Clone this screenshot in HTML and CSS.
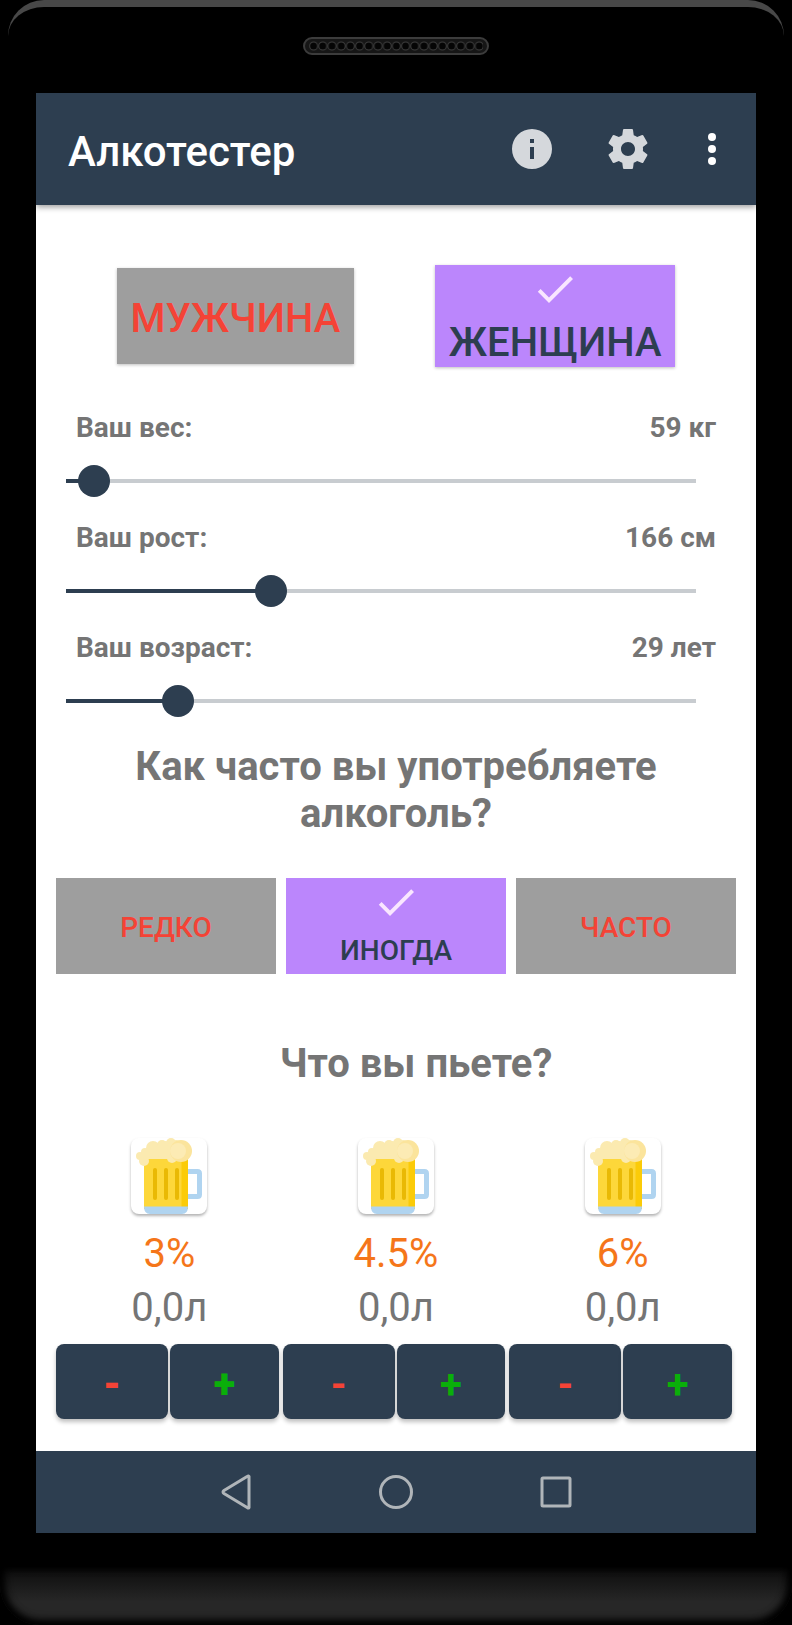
FILE: index.html
```html
<!DOCTYPE html>
<html lang="ru">
<head>
<meta charset="UTF-8">
<meta name="viewport" content="width=device-width, initial-scale=1">
<title>Алкотестер</title>
<link rel="stylesheet" href="styles.css">
</head>
<body>

<!-- shared icons -->
<svg class="sprite" aria-hidden="true">
	<symbol id="check" viewBox="0 0 24 24">
		<path d="M9 16.2 4.8 12l-1.4 1.4L9 19 21 7l-1.4-1.4z" fill="#f9e6ff"/>
	</symbol>
	<symbol id="beer" viewBox="11 8 76 76">
		<path d="M66 41.500h11.500q2 0 2 2v21q0 2-2 2H66" fill="none" stroke="#b0d4f0" stroke-width="5"/>
		<path d="M24 27h44v52H24z" fill="#fdd73a"/>
		<path d="M61.500 27H68v52h-6.500z" fill="#fbcb08"/>
		<path d="M24 76.500h44q0 7.500-6 7.500H30q-6 0-6-7.500z" fill="#b0d4f0"/>
		<g fill="#e9b904">
			<rect x="33" y="38" width="4" height="32" rx="2"/>
			<rect x="44" y="38" width="4" height="32" rx="2"/>
			<rect x="55" y="38" width="4" height="32" rx="2"/>
		</g>
		<g fill="#fbeab0">
			<circle cx="20" cy="26" r="4"/>
			<circle cx="25" cy="22" r="4"/>
			<circle cx="24" cy="31" r="5"/>
			<circle cx="33" cy="18" r="7"/>
			<circle cx="42" cy="15" r="5"/>
			<circle cx="51" cy="13" r="5"/>
			<circle cx="52" cy="28" r="5"/>
			<path d="M21 22h42v7H21z"/>
			<circle cx="45" cy="20" r="9"/>
			<circle cx="56" cy="19" r="9"/>
		</g>
		<circle cx="61" cy="21" r="11" fill="#fbe49c"/>
		<circle cx="58" cy="21" r="8" fill="#fcebb4"/>
	</symbol>
</svg>

<div class="phone">
	<div class="phone_top">
		<svg class="speaker" viewBox="0 0 186 18" aria-hidden="true">
			<defs>
				<pattern id="holes" x="6" y="3" width="9.2" height="12" patternUnits="userSpaceOnUse">
					<circle cx="4.600" cy="6" r="4" fill="#050505" stroke="#3c3c3c"/>
				</pattern>
			</defs>
			<rect x="1" y="1" width="184" height="16" rx="8" fill="#161616" stroke="#3c3c3c" stroke-width="2"/>
			<rect x="6" y="3" width="174" height="12" fill="url(#holes)"/>
		</svg>
	</div>

	<div class="screen">
		<header class="toolbar">
			<h1>Алкотестер</h1>
			<button class="tool" aria-label="Информация">
				<svg viewBox="0 0 24 24"><path d="M12 2a10 10 0 1 0 0 20 10 10 0 0 0 0-20zm1 15h-2v-6h2v6zm0-8h-2V7h2v2z" fill="#d5d8dc"/></svg>
			</button>
			<button class="tool" aria-label="Настройки">
				<svg viewBox="0 0 24 24"><path d="M19.430 12.980c.04-.32.07-.64.07-.98s-.03-.66-.07-.98l2.110-1.650c.19-.15.24-.42.12-.64l-2-3.460c-.12-.22-.39-.3-.61-.22l-2.490 1c-.52-.4-1.080-.73-1.690-.98l-.38-2.650C14.460 2.180 14.250 2 14 2h-4c-.25 0-.46.18-.49.42l-.38 2.650c-.61.25-1.170.59-1.690.98l-2.490-1c-.23-.09-.49 0-.61.22l-2 3.460c-.13.22-.07.49.12.64l2.110 1.650c-.04.32-.07.65-.07.98s.03.66.07.98l-2.110 1.650c-.19.15-.24.42-.12.64l2 3.460c.12.22.39.3.61.22l2.490-1c.52.4 1.080.73 1.690.98l.38 2.650c.03.24.24.42.49.42h4c.25 0 .46-.18.49-.42l.38-2.650c.61-.25 1.170-.59 1.690-.98l2.490 1c.23.09.49 0 .61-.22l2-3.460c.12-.22.07-.49-.12-.64l-2.110-1.650zM12 15.500c-1.930 0-3.500-1.570-3.500-3.500s1.570-3.500 3.500-3.500 3.500 1.570 3.500 3.500-1.570 3.500-3.500 3.500z" fill="#d5d8dc"/></svg>
			</button>
			<button class="tool tool_more" aria-label="Ещё">
				<svg viewBox="0 0 24 24" fill="#ffffff"><circle cx="12" cy="6" r="2"/><circle cx="12" cy="12" r="2"/><circle cx="12" cy="18" r="2"/></svg>
			</button>
		</header>

		<main class="content">
			<div class="gender">
				<button class="choice choice_big" aria-pressed="false">МУЖЧИНА</button>
				<button class="choice choice_big on" aria-pressed="true"><svg><use href="#check"/></svg>ЖЕНЩИНА</button>
			</div>

			<div class="sliders">
				<div class="slider">
					<div class="slider_text"><label for="weight">Ваш вес:</label><output for="weight">59 кг</output></div>
					<input type="range" id="weight" min="50" max="250" value="59" data-unit="кг">
				</div>
				<div class="slider">
					<div class="slider_text"><label for="height">Ваш рост:</label><output for="height">166 см</output></div>
					<input type="range" id="height" min="140" max="220" value="166" data-unit="см">
				</div>
				<div class="slider">
					<div class="slider_text"><label for="age">Ваш возраст:</label><output for="age">29 лет</output></div>
					<input type="range" id="age" min="18" max="80" value="29" data-unit="лет">
				</div>
			</div>

			<h2 class="question_often">Как часто вы употребляете алкоголь?</h2>
			<div class="often">
				<button class="choice" aria-pressed="false">РЕДКО</button>
				<button class="choice on" aria-pressed="true"><svg><use href="#check"/></svg>ИНОГДА</button>
				<button class="choice" aria-pressed="false">ЧАСТО</button>
			</div>

			<h2 class="question_drink">Что вы пьете?</h2>
			<div class="drinks">
				<div class="drink drink_first">
					<svg class="beer"><use href="#beer"/></svg>
					<div class="percent">3%</div>
					<div class="volume">0,0л</div>
					<div class="buttons">
						<button class="minus">-</button>
						<button class="plus">+</button>
					</div>
				</div>
				<div class="drink">
					<svg class="beer"><use href="#beer"/></svg>
					<div class="percent">4.5%</div>
					<div class="volume">0,0л</div>
					<div class="buttons">
						<button class="minus">-</button>
						<button class="plus">+</button>
					</div>
				</div>
				<div class="drink">
					<svg class="beer"><use href="#beer"/></svg>
					<div class="percent">6%</div>
					<div class="volume">0,0л</div>
					<div class="buttons">
						<button class="minus">-</button>
						<button class="plus">+</button>
					</div>
				</div>
			</div>
		</main>

		<nav class="navbar">
			<button aria-label="Назад"><svg viewBox="0 0 40 40"><path d="M33 4.500v31q-.5 1-1.500.3L8 21.500q-2-1.500 0-3L31.500 4.200q1-.7 1.500.3z"/></svg></button>
			<button aria-label="Домой"><svg viewBox="0 0 40 40"><circle cx="20" cy="20" r="15.500"/></svg></button>
			<button aria-label="Обзор"><svg viewBox="0 0 40 40"><rect x="6" y="6" width="28" height="28" rx="1"/></svg></button>
		</nav>
	</div>

	<div class="phone_bottom"></div>
</div>

<script>
	function updateSlider(input) {
		const part = (input.value - input.min) / (input.max - input.min);
		input.style.setProperty('--part', part);
		document.querySelector('output[for=' + input.id + ']').value = input.value + ' ' + input.dataset.unit;
	}

	document.querySelectorAll('input[type=range]').forEach(function (input) {
		updateSlider(input);
		input.addEventListener('input', function () { updateSlider(input); });
	});

	document.querySelectorAll('.drink').forEach(function (drink) {
		let volume = 0;
		function add(step) {
			volume = Math.max(0, volume + step);
			drink.querySelector('.volume').innerText = volume.toFixed(1).replace('.', ',') + 'л';
		}
		drink.querySelector('.minus').onclick = function () { add(-0.5); };
		drink.querySelector('.plus').onclick = function () { add(0.5); };
	});
</script>
</body>
</html>
```

FILE: styles.css
```css
* {
	box-sizing: border-box;
}
body {
	margin: 0;
	background-color: #000000;
	font-family: Roboto, "Noto Sans", sans-serif;
	color: #757575;
}
button {
	border: none;
	padding: 0;
	font-family: inherit;
	cursor: pointer;
}
.sprite {
	position: absolute;
	width: 0;
	height: 0;
}

/* phone frame */
.phone {
	display: flex;
	flex-direction: column;
	min-height: 100vh;
}
.phone_top {
	height: 93px;
	margin: 0 8px;
	padding-top: 30px;
	border-top: 7px solid #484848;
	border-radius: 36px 36px 0 0;
	text-align: center;
}
.speaker {
	width: 186px;
	height: 18px;
}
.screen {
	display: flex;
	flex-direction: column;
	flex: 1;
	margin: 0 36px;
	background-color: #ffffff;
}
.phone_bottom {
	height: 58px;
	margin-top: 34px;
	background: linear-gradient(#0c0c0c, #272727 60%, #272727);
	border-radius: 0 0 40px 40px;
	box-shadow: inset 0 -4px 8px #000000, inset 4px 0 8px #000000, inset -4px 0 8px #000000;
}

/* top bar */
.toolbar {
	display: flex;
	align-items: center;
	height: 112px;
	padding: 0 8px 0 32px;
	background-color: #2d3e50;
	box-shadow: 0 2px 6px rgba(0, 0, 0, 0.4);
}
.toolbar h1 {
	flex: 1;
	margin: 4px 0 0;
	font-size: 42px;
	line-height: 47px;
	font-weight: 500;
	color: #ffffff;
}
.tool {
	width: 96px;
	height: 96px;
	background: none;
}
.tool_more {
	width: 72px;
}
.tool svg {
	display: block;
	width: 48px;
	height: 48px;
	margin: 0 auto;
}

.content {
	flex: 1;
	padding: 60px 20px 32px;
}

/* toggle buttons */
.choice {
	height: 96px;
	padding-top: 2px;
	background-color: #9e9e9e;
	color: #f44336;
	font-size: 28px;
	line-height: 33px;
	font-weight: 500;
}
.choice.on {
	display: flex;
	flex-direction: column;
	align-items: center;
	gap: 8px;
	padding-top: 0;
	background-color: #bb86fc;
	color: #2d3e50;
}
.choice svg {
	width: 48px;
	height: 48px;
}
.choice_big {
	padding: 4px 14px 0;
	font-size: 40px;
	line-height: 47px;
	box-shadow: 0 1px 3px rgba(0, 0, 0, 0.25);
}
.choice_big.on {
	height: 102px;
	gap: 6px;
}
.gender {
	display: flex;
	justify-content: space-evenly;
	align-items: center;
	margin: 0 -20px;
}
.often {
	display: grid;
	grid-template-columns: repeat(3, 1fr);
	gap: 10px;
}

/* sliders */
.sliders {
	display: flex;
	flex-direction: column;
	gap: 24px;
	margin-top: 44px;
}
.slider_text {
	display: flex;
	justify-content: space-between;
	margin-bottom: 20px;
	padding: 0 20px;
	font-size: 28px;
	line-height: 34px;
	font-weight: 700;
}
.slider {
	padding-right: 24px;
}
.slider .slider_text {
	margin-right: -24px;
}
input[type=range] {
	-webkit-appearance: none;
	appearance: none;
	display: block;
	width: calc(100% + 6px);
	height: 32px;
	margin: 0 0 0 -6px;
	background: linear-gradient(#2d3e50, #2d3e50) 16px 50% / calc((100% - 32px) * var(--part)) 4px no-repeat,
		linear-gradient(90deg, transparent 16px, #c8ccd0 16px, #c8ccd0 calc(100% - 16px), transparent calc(100% - 16px)) 0 50% / 100% 4px no-repeat;
	cursor: pointer;
}
input[type=range]::-webkit-slider-thumb {
	-webkit-appearance: none;
	width: 32px;
	height: 32px;
	border-radius: 50%;
	background-color: #2d3e50;
}

h2 {
	margin: 0;
	font-size: 40px;
	line-height: 47px;
	text-align: center;
}
.question_often {
	padding: 26px 0 41px;
}
.question_drink {
	padding: 66px 0 51px 40px;
}

/* drinks */
.drinks {
	display: grid;
	grid-template-columns: repeat(3, 1fr);
}
.drink {
	text-align: center;
	font-size: 40px;
	line-height: 47px;
}
.beer {
	display: block;
	width: 76px;
	height: 76px;
	margin: 0 auto 16px;
	border-radius: 8px;
	box-shadow: 0 2px 3px rgba(0, 0, 0, 0.3);
}
.percent {
	margin-bottom: 7px;
	color: #f5761a;
}
.volume {
	margin-bottom: 13px;
}
.buttons {
	display: flex;
	gap: 2px;
	padding-right: 4px;
}
.buttons button {
	flex: 1;
	height: 75px;
	padding-top: 6px;
	border-radius: 8px;
	background-color: #2d3e50;
	box-shadow: 0 3px 4px rgba(0, 0, 0, 0.25);
	font-size: 40px;
	font-weight: 700;
}
.drink_first .buttons button {
	font-weight: 900;
}
.buttons .minus {
	flex: none;
	width: 112px;
	color: #f44336;
}
.buttons .plus {
	color: #0aaf0a;
}

/* system navigation */
.navbar {
	display: flex;
	justify-content: center;
	height: 82px;
	background-color: #2d3e50;
}
.navbar button {
	width: 160px;
	background: none;
}
.navbar svg {
	display: block;
	width: 40px;
	height: 40px;
	margin: 0 auto;
	fill: none;
	stroke: #b0b5b9;
	stroke-width: 3;
}
```
